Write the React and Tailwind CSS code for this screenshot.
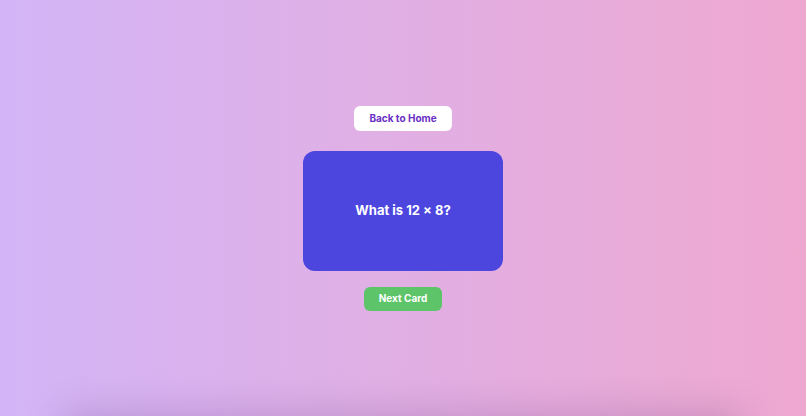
import React from 'react';

function App() {
  return (
    <div className="bg-gradient-to-r from-[#d3b5f7] to-[#eea8d0] font-['Inter',sans-serif]">
      <div className="h-screen flex flex-col items-center justify-center">
        <button className="bg-white text-[#6b2fc4] text-[10px] font-bold px-[15px] h-[25px] rounded-md">
          Back to Home
        </button>
        <div className="mt-5 w-[200px] h-[120px] rounded-xl bg-[#4c46df] flex items-center justify-center">
          <p className="text-white text-[13px] font-bold">What is 12 × 8?</p>
        </div>
        <button className="mt-4 bg-[#5dc46a] text-white text-[10px] font-bold px-[15px] h-[24px] rounded-md">
          Next Card
        </button>
      </div>
      <div className="mx-16 h-10 shadow-[0_0_40px_rgba(60,20,90,0.22)]"></div>
    </div>
  );
}

export default App;
